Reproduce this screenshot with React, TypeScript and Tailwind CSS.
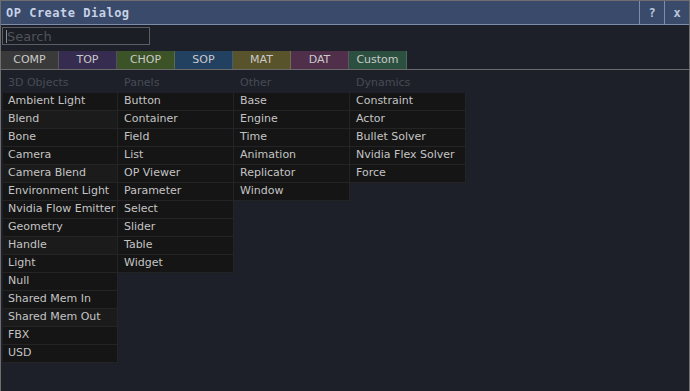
import React from "react";

const tabs = [
  { label: "COMP", cls: "bg-[#3a3a3a]" },
  { label: "TOP", cls: "bg-[#362c4f]" },
  { label: "CHOP", cls: "bg-[#3c5227]" },
  { label: "SOP", cls: "bg-[#22405f]" },
  { label: "MAT", cls: "bg-[#58532a]" },
  { label: "DAT", cls: "bg-[#4f2f4a]" },
  { label: "Custom", cls: "bg-[#2c5040]" },
];

const columns: { title: string; items: string[]; w: string; pl: string }[] = [
  {
    title: "3D Objects",
    w: "w-[115px]",
    pl: "pl-[5px]",
    items: [
      "Ambient Light",
      "Blend",
      "Bone",
      "Camera",
      "Camera Blend",
      "Environment Light",
      "Nvidia Flow Emitter",
      "Geometry",
      "Handle",
      "Light",
      "Null",
      "Shared Mem In",
      "Shared Mem Out",
      "FBX",
      "USD",
    ],
  },
  {
    title: "Panels",
    w: "w-[116px]",
    pl: "pl-[6px]",
    items: ["Button", "Container", "Field", "List", "OP Viewer", "Parameter", "Select", "Slider", "Table", "Widget"],
  },
  {
    title: "Other",
    w: "w-[116px]",
    pl: "pl-[6px]",
    items: ["Base", "Engine", "Time", "Animation", "Replicator", "Window"],
  },
  {
    title: "Dynamics",
    w: "w-[116px]",
    pl: "pl-[6px]",
    items: ["Constraint", "Actor", "Bullet Solver", "Nvidia Flex Solver", "Force"],
  },
];

const lighter = new Set(["Blend", "Handle", "Shared Mem Out", "Camera Blend"]);

export default function App() {
  return (
    <div
      className="w-[690px] h-[391px] bg-[#1d2029] border-t border-l border-r border-[#6e6e6e] flex flex-col overflow-hidden"
      style={{ fontFamily: '"DejaVu Sans", sans-serif' }}
    >
      {/* Title bar */}
      <div className="h-[24px] shrink-0 bg-[#394a6b] border-b border-[#7e8cab] flex items-stretch">
        <div
          className="flex-1 flex items-center pl-[5px] text-[12px] font-bold tracking-[0.5px] text-[#c7d1e6]"
          style={{ fontFamily: '"DejaVu Sans Mono", monospace' }}
        >
          OP Create Dialog
        </div>
        <div
          className="w-[25px] border-l border-[#7e8cab] flex items-center justify-center text-[12px] font-bold text-[#b9c5dd]"
          style={{ fontFamily: '"DejaVu Sans Mono", monospace' }}
        >
          ?
        </div>
        <div
          className="w-[25px] border-l border-[#7e8cab] flex items-center justify-center text-[12px] font-bold text-[#b9c5dd]"
          style={{ fontFamily: '"DejaVu Sans Mono", monospace' }}
        >
          x
        </div>
      </div>

      {/* Search */}
      <div className="mt-[2px] ml-[1px] w-[148px] h-[18px] border border-[#5a5d64] bg-[#1b1e25] relative flex items-center">
        <div className="absolute left-[3px] top-[2px] w-[1px] h-[13px] bg-[#8a8c90]" />
        <span className="pl-[4px] text-[13px] leading-none text-[#4f535b]">Search</span>
      </div>

      {/* Tabs */}
      <div className="mt-[6px] h-[19px] shrink-0 border-b border-[#6a6a6a] flex">
        {tabs.map((t) => (
          <div
            key={t.label}
            className={`w-[58px] ${t.cls} border-r border-white/15 flex items-center justify-center pt-[1px] text-[11px] text-[#cacaca]`}
          >
            {t.label}
          </div>
        ))}
      </div>

      {/* Columns */}
      <div className="mt-[4px] ml-[2px] flex items-start">
        {columns.map((c) => (
          <div key={c.title} className={`${c.w} flex flex-col`}>
            <div className={`h-[19px] flex items-center ${c.pl} text-[11px] text-[#474b53]`}>{c.title}</div>
            {c.items.map((it) => (
              <div
                key={it}
                className={`h-[18px] flex items-center ${c.pl} text-[11px] text-[#c4c4c4] whitespace-nowrap border-b border-r border-[#242426] ${
                  lighter.has(it) && c.title === "3D Objects" ? "bg-[#1b1b1b]" : "bg-[#151515]"
                }`}
              >
                {it}
              </div>
            ))}
          </div>
        ))}
      </div>
    </div>
  );
}
